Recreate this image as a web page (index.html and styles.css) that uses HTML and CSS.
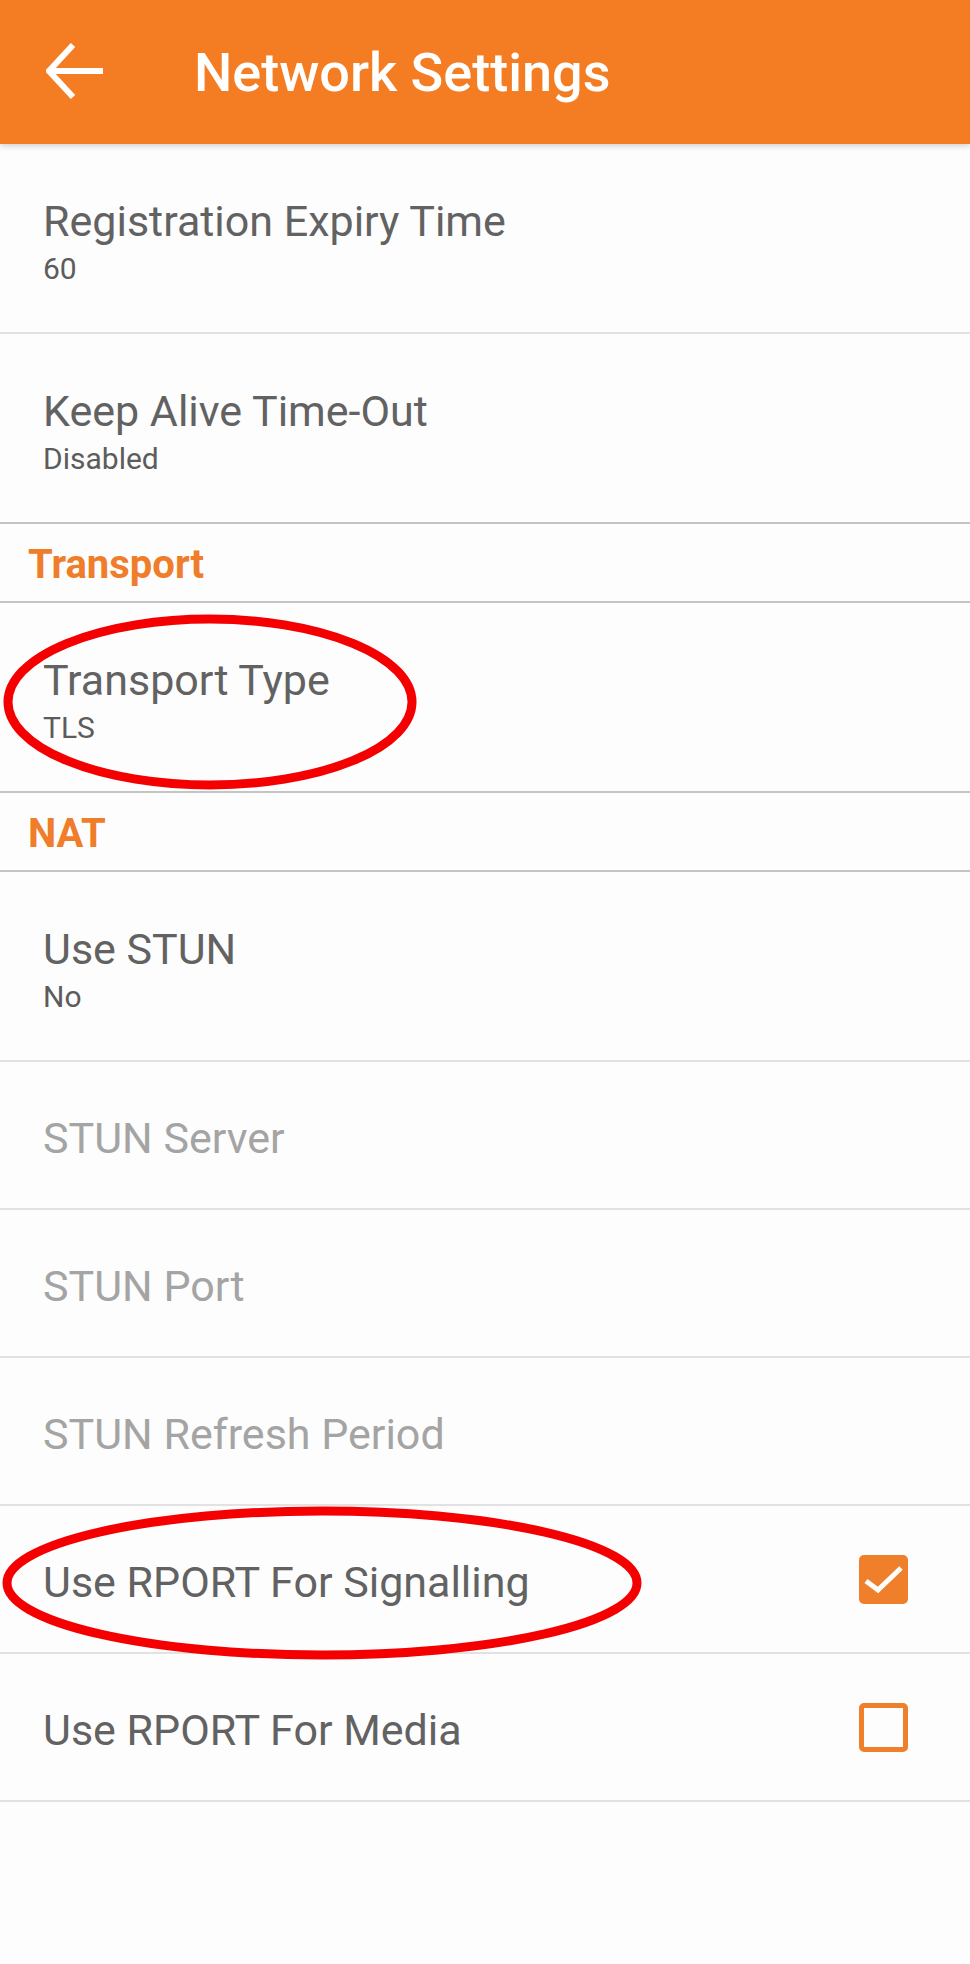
FILE: index.html
```html
<!DOCTYPE html>
<html>
<head>
    <title>Network Settings</title>
    <link rel="stylesheet" href="styles.css">
</head>
<body>
    <div class="app">
        <header class="toolbar">
            <svg class="back" width="58" height="58" viewBox="0 0 58 58">
                <path d="M57 28H4M27 2L3 28l24 26" fill="none" stroke="#fff" stroke-width="6"/>
            </svg>
            <h1>Network Settings</h1>
        </header>

        <ul class="prefs">
            <li class="pref two">
                <div class="pref-title">Registration Expiry Time</div>
                <div class="pref-summary">60</div>
            </li>
            <li class="pref two">
                <div class="pref-title">Keep Alive Time-Out</div>
                <div class="pref-summary">Disabled</div>
            </li>
            <li class="category">Transport</li>
            <li class="pref two">
                <div class="pref-title">Transport Type</div>
                <div class="pref-summary">TLS</div>
            </li>
            <li class="category">NAT</li>
            <li class="pref two">
                <div class="pref-title">Use STUN</div>
                <div class="pref-summary">No</div>
            </li>
            <li class="pref one disabled">
                <div class="pref-title">STUN Server</div>
            </li>
            <li class="pref one disabled">
                <div class="pref-title">STUN Port</div>
            </li>
            <li class="pref one disabled">
                <div class="pref-title">STUN Refresh Period</div>
            </li>
            <li class="pref one check">
                <div class="pref-title">Use RPORT For Signalling</div>
                <span class="box on">
                    <svg width="49" height="49" viewBox="0 0 49 49">
                        <path d="M7 26l12 9L42 13" fill="none" stroke="#fff" stroke-width="5"/>
                    </svg>
                </span>
            </li>
            <li class="pref one check">
                <div class="pref-title">Use RPORT For Media</div>
                <span class="box"></span>
            </li>
        </ul>

        <!-- red marks drawn over the screenshot -->
        <svg class="marks" width="970" height="1964" viewBox="0 0 970 1964">
            <ellipse cx="210" cy="702" rx="202" ry="83" fill="none" stroke="#f40000" stroke-width="9"/>
            <ellipse cx="322" cy="1583" rx="315" ry="72" fill="none" stroke="#f40000" stroke-width="9"/>
        </svg>
    </div>
</body>
</html>
```

FILE: styles.css
```css
body { margin: 0; background: #fdfdfd; font-family: Roboto, "Noto Sans", sans-serif; }
.app { position: relative; width: 970px; min-height: 1964px; }

.toolbar { height: 144px; display: flex; align-items: center; background: #f47c22; box-shadow: 0 2px 6px rgba(0,0,0,0.18); position: relative; z-index: 1; }
.back { margin-left: 46px; }
.toolbar h1 { margin: 0 0 0 90px; color: #fff; font-size: 54px; font-weight: 500; }

.prefs { list-style: none; margin: 0; padding: 0; }
.pref { border-bottom: 2px solid #e2e2e2; padding: 0 62px 0 43px; }
.pref.two { height: 190px; padding-top: 53px; box-sizing: border-box; }
.pref.one { height: 146px; display: flex; align-items: center; padding-top: 5px; box-sizing: border-box; height: 148px; }
.pref-title { font-size: 43px; line-height: 48px; color: #626262; }
.pref-summary { font-size: 30px; line-height: 36px; margin-top: 6px; color: #5c5c5c; }
.disabled .pref-title { color: #a4a4a4; }

.category { height: 79px; display: flex; align-items: center; padding: 4px 0 0 28px; box-sizing: border-box;
  border-bottom: 2px solid #c4c4c4; color: #ef7d2a; font-size: 40px; font-weight: 700; }
.pref:has(+ .category) { border-bottom-color: #c4c4c4; }

.check { justify-content: space-between; }
.box { width: 49px; height: 49px; box-sizing: border-box; border: 5px solid #ef7f2b; border-radius: 5px; margin-top: -5px; }
.box.on { background: #ef7f2b; border: none; }
.box svg { display: block; }

.marks { position: absolute; left: 0; top: 0; pointer-events: none; z-index: 2; }
```
